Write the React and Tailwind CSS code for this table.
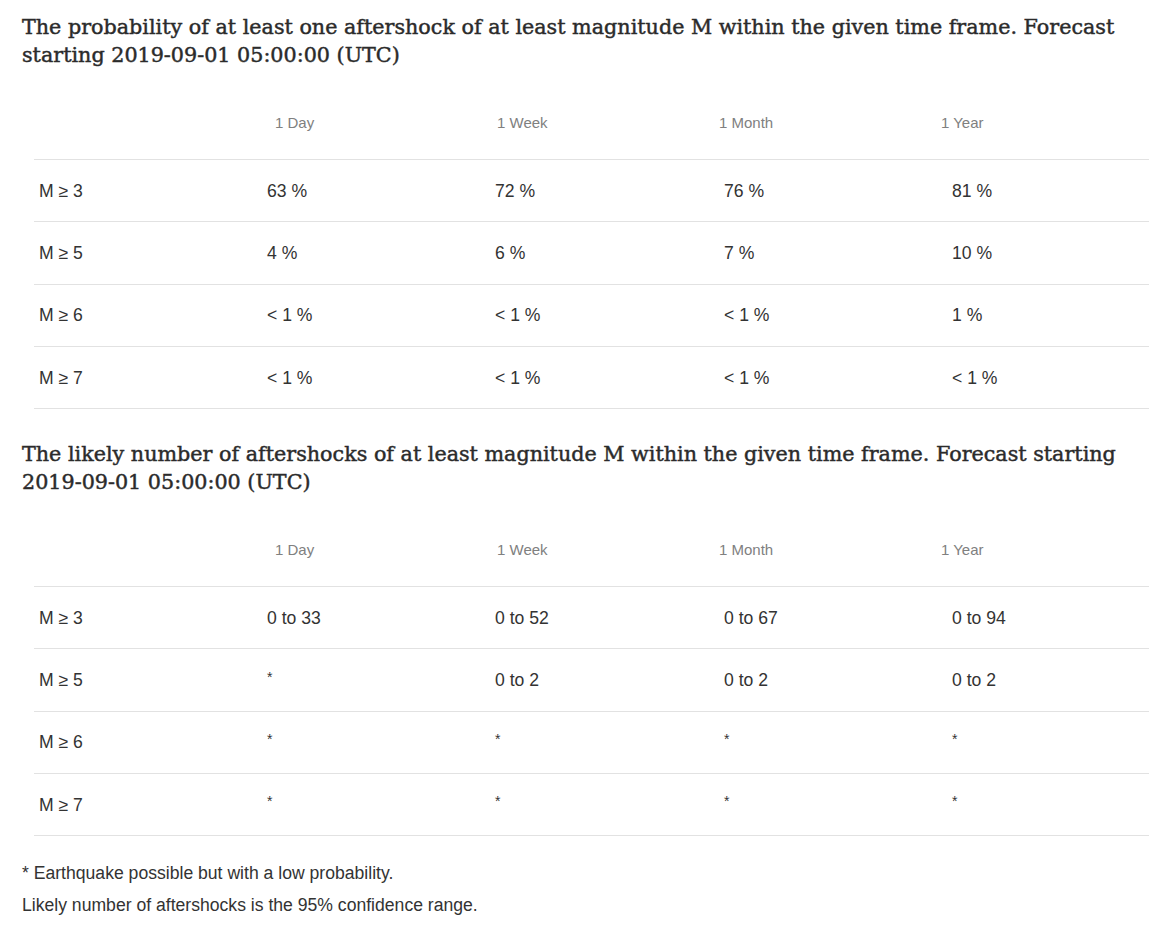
import React from "react";

const cols = ["1 Day", "1 Week", "1 Month", "1 Year"];
const headPad = ["pl-[18px]", "pl-[17px]", "pl-[16px]", "pl-[15px]"];
const valPad = ["pl-[10px]", "pl-[15px]", "pl-[21px]", "pl-[26px]"];

function Table({ rows }) {
  return (
    <div className="ml-[12px] w-[1115px]">
      <div className="flex h-[75px] items-center border-b border-[#e2e2e2] pt-[2px] text-[15px] text-[#808080]">
        <div className="w-[223px]" />
        {cols.map((c, i) => (
          <div key={c} className={`w-[223px] ${headPad[i]}`}>
            {c}
          </div>
        ))}
      </div>
      {rows.map((r) => (
        <div
          key={r[0]}
          className="flex h-[62.25px] items-center border-b border-[#e2e2e2] pt-[1px] text-[17.6px] text-[#333]"
        >
          <div className="w-[223px] pl-[5px]">{r[0]}</div>
          {r.slice(1).map((v, i) => (
            <div
              key={i}
              className={`w-[223px] ${valPad[i]} ${v === "*" ? "text-[14px] -mt-[6px]" : ""}`}
            >
              {v}
            </div>
          ))}
        </div>
      ))}
    </div>
  );
}

export default function App() {
  const t1 = [
    ["M ≥ 3", "63 %", "72 %", "76 %", "81 %"],
    ["M ≥ 5", "4 %", "6 %", "7 %", "10 %"],
    ["M ≥ 6", "< 1 %", "< 1 %", "< 1 %", "1 %"],
    ["M ≥ 7", "< 1 %", "< 1 %", "< 1 %", "< 1 %"],
  ];
  const t2 = [
    ["M ≥ 3", "0 to 33", "0 to 52", "0 to 67", "0 to 94"],
    ["M ≥ 5", "*", "0 to 2", "0 to 2", "0 to 2"],
    ["M ≥ 6", "*", "*", "*", "*"],
    ["M ≥ 7", "*", "*", "*", "*"],
  ];
  return (
    <div
      className="min-h-[943px] bg-white pl-[22px] pt-[13px] text-[#333]"
      style={{ fontFamily: '"Liberation Sans", Arial, sans-serif' }}
    >
      <h2
        className="text-[20.7px] leading-[28px] text-[#2b2b2b] [-webkit-text-stroke:0.45px_#2b2b2b]"
        style={{ fontFamily: '"DejaVu Serif", serif' }}
      >
        The probability of at least one aftershock of at least magnitude M within the given time frame. Forecast
        <br />
        starting 2019-09-01 05:00:00 (UTC)
      </h2>
      <div className="mt-[16px]">
        <Table rows={t1} />
      </div>
      <h2
        className="mt-[31px] text-[20.7px] leading-[28px] text-[#2b2b2b] [-webkit-text-stroke:0.45px_#2b2b2b]"
        style={{ fontFamily: '"DejaVu Serif", serif' }}
      >
        The likely number of aftershocks of at least magnitude M within the given time frame. Forecast starting
        <br />
        2019-09-01 05:00:00 (UTC)
      </h2>
      <div className="mt-[16px]">
        <Table rows={t2} />
      </div>
      <p className="mt-[25px] text-[17.6px] leading-[24px]">* Earthquake possible but with a low probability.</p>
      <p className="mt-[8px] text-[17.6px] leading-[24px]">Likely number of aftershocks is the 95% confidence range.</p>
    </div>
  );
}
